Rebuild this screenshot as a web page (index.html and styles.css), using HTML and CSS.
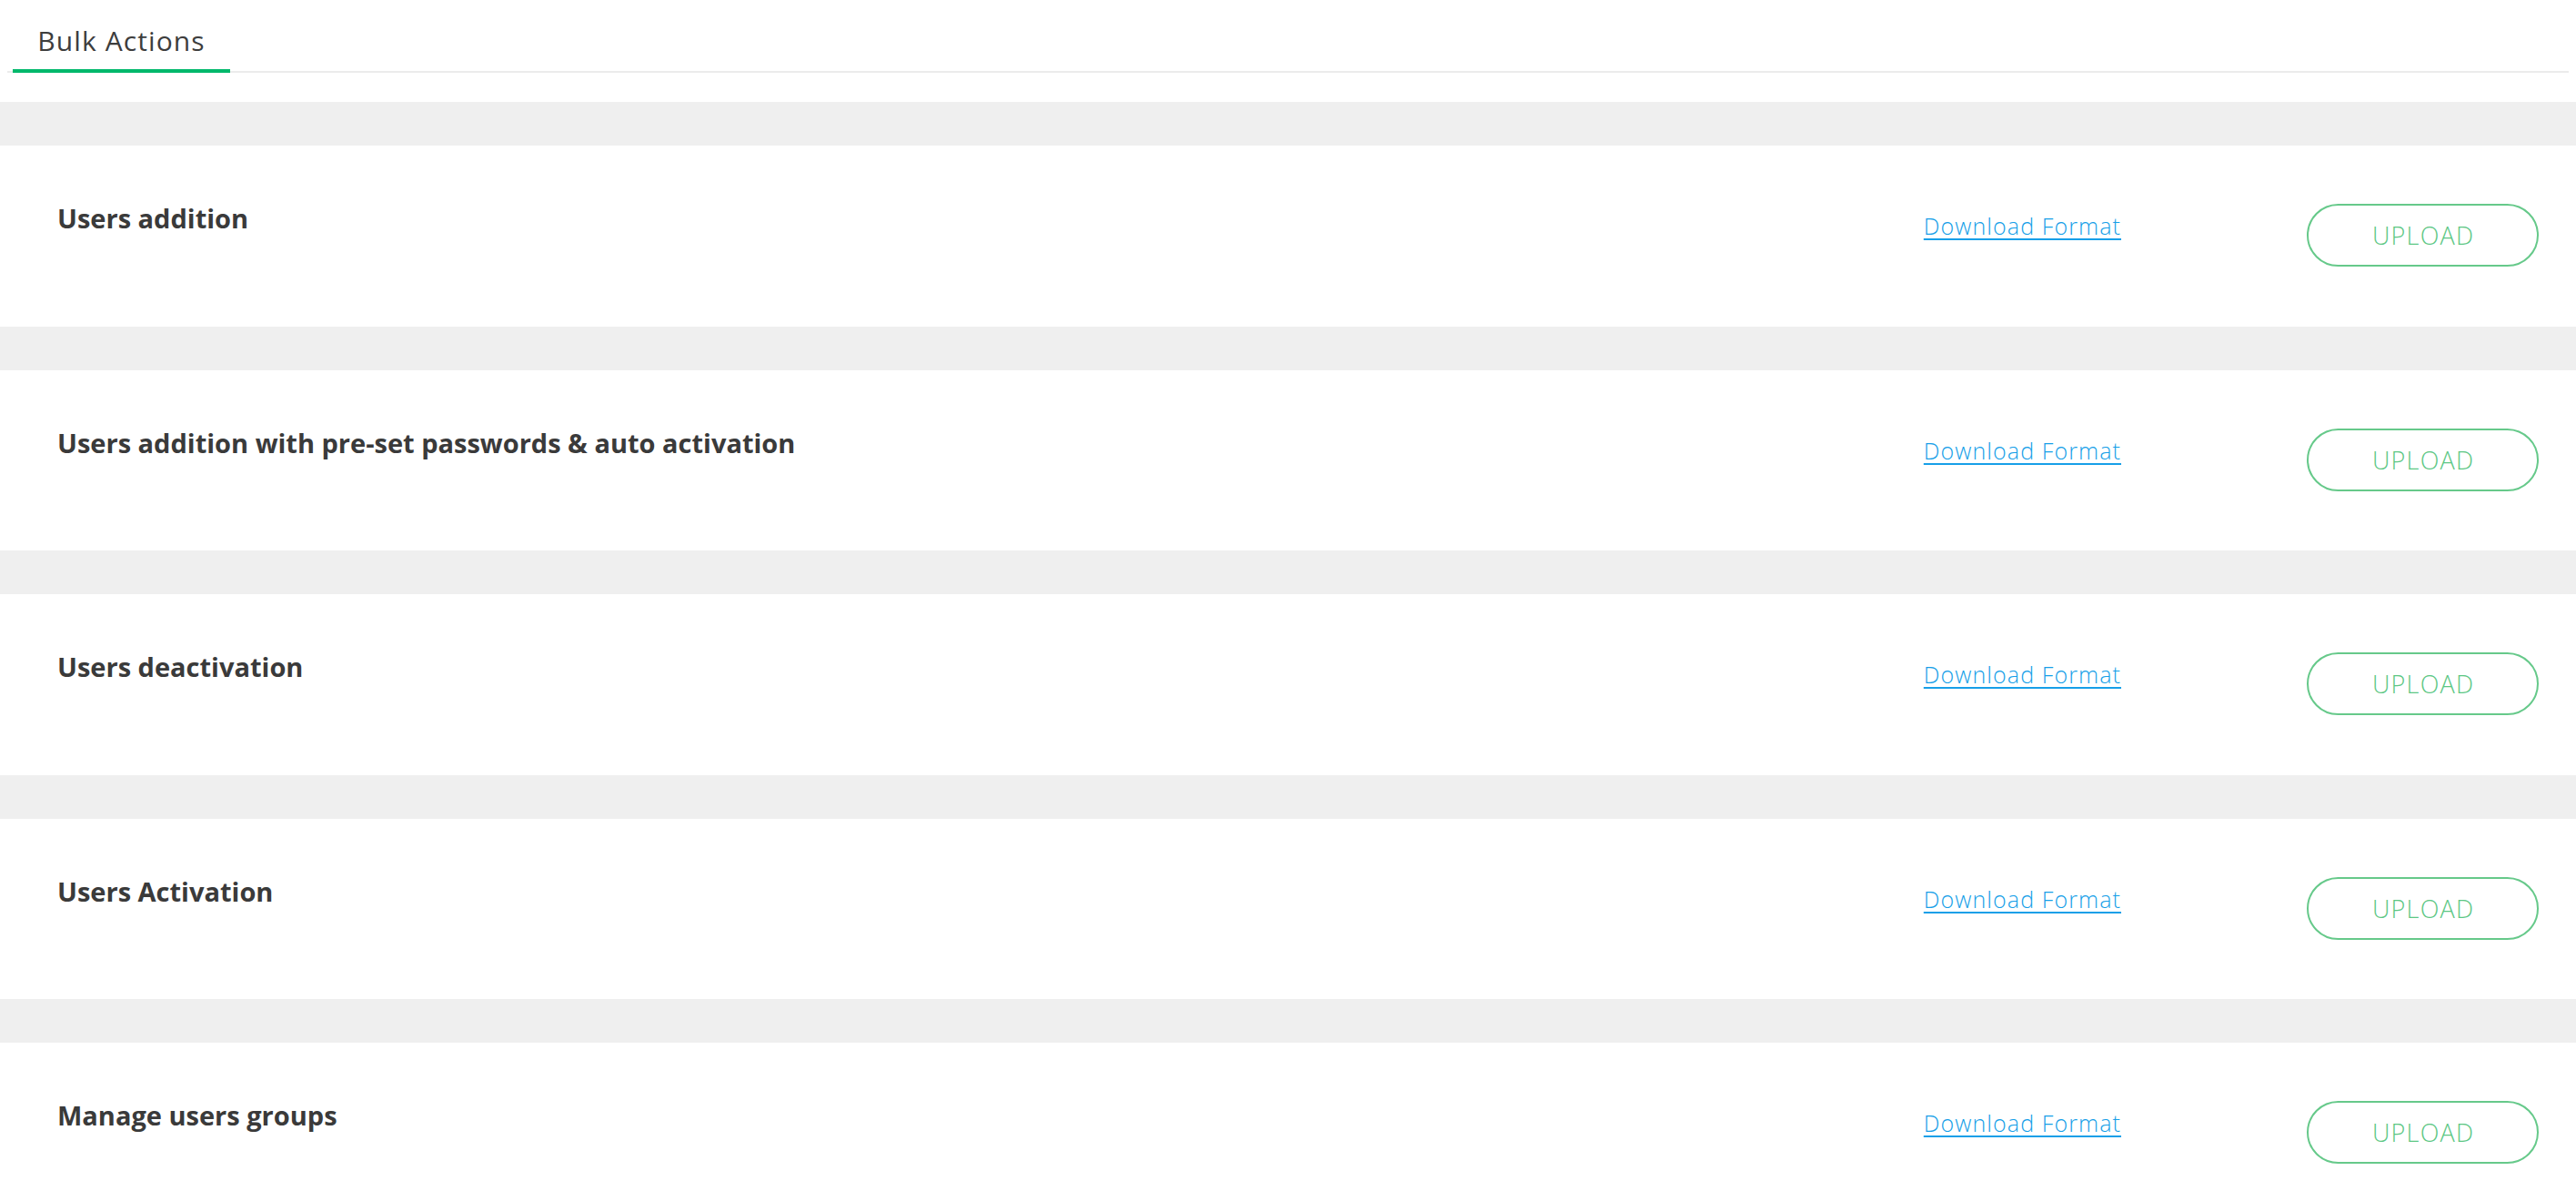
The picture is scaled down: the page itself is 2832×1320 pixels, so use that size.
FILE: index.html
```html
<!DOCTYPE html>
<html lang="en">
<head>
<meta charset="utf-8">
<title>Bulk Actions</title>
<link rel="stylesheet" href="styles.css">
</head>
<body>
<div class="tabs">
  <div class="tab tab-active">Bulk Actions</div>
</div>
<div class="list">
  <section class="card">
    <h3 class="card-title">Users addition</h3>
    <div class="card-actions">
      <a class="download" href="#">Download Format</a>
      <button class="upload" type="button">UPLOAD</button>
    </div>
  </section>
  <section class="card">
    <h3 class="card-title">Users addition with pre-set passwords &amp; auto activation</h3>
    <div class="card-actions">
      <a class="download" href="#">Download Format</a>
      <button class="upload" type="button">UPLOAD</button>
    </div>
  </section>
  <section class="card">
    <h3 class="card-title">Users deactivation</h3>
    <div class="card-actions">
      <a class="download" href="#">Download Format</a>
      <button class="upload" type="button">UPLOAD</button>
    </div>
  </section>
  <section class="card">
    <h3 class="card-title">Users Activation</h3>
    <div class="card-actions">
      <a class="download" href="#">Download Format</a>
      <button class="upload" type="button">UPLOAD</button>
    </div>
  </section>
  <section class="card">
    <h3 class="card-title">Manage users groups</h3>
    <div class="card-actions">
      <a class="download" href="#">Download Format</a>
      <button class="upload" type="button">UPLOAD</button>
    </div>
  </section>
</div>
</body>
</html>
```

FILE: styles.css
```css
* { box-sizing: border-box; }
html, body { margin: 0; padding: 0; background: #ffffff; }
body {
  font-family: "Open Sans", "Liberation Sans", sans-serif;
  color: #3d3d3d;
}
.tabs {
  margin: 0 8px;
  height: 80px;
  border-bottom: 2px solid #ebebeb;
  display: flex;
  align-items: flex-end;
}
.tab {
  margin-left: 6px;
  width: 239px;
  height: 80px;
  padding-top: 24px;
  text-align: center;
  font-size: 30px;
  letter-spacing: 1.1px;
  font-weight: 500;
  color: #3d3d3d;
  position: relative;
  top: 2px;
}
.tab-active { border-bottom: 4px solid #00b86b; }
.list {
  margin-top: 32px;
  background: #efefef;
  padding-top: 48px;
  display: flex;
  flex-direction: column;
  gap: 48px;
}
.card {
  background: #ffffff;
  height: 198.5px;
  padding: 64px 41px 0 63px;
  display: flex;
  justify-content: space-between;
  align-items: flex-start;
}
.card-title {
  margin: 0;
  padding-top: 0;
  margin-top: -4px;
  font-size: 29px;
  line-height: 40px;
  font-weight: 700;
  color: #3a3a3a;
}
.card-actions {
  display: flex;
  align-items: center;
  gap: 204px;
}
.download {
  font-size: 25px;
  letter-spacing: 1.1px;
  font-weight: 300;
  color: #179fe8;
  text-decoration: underline;
  text-underline-offset: 4px;
  padding-top: 7px;
  align-self: flex-start;
}
.upload {
  width: 255px;
  height: 69px;
  border: 2px solid #66c98a;
  border-radius: 35px;
  background: #ffffff;
  color: #5cc784;
  font-family: "Open Sans", "Liberation Sans", sans-serif;
  font-size: 27px;
  letter-spacing: 1.2px;
  font-weight: 300;
  padding: 0 0 0 1.2px;
}
```
